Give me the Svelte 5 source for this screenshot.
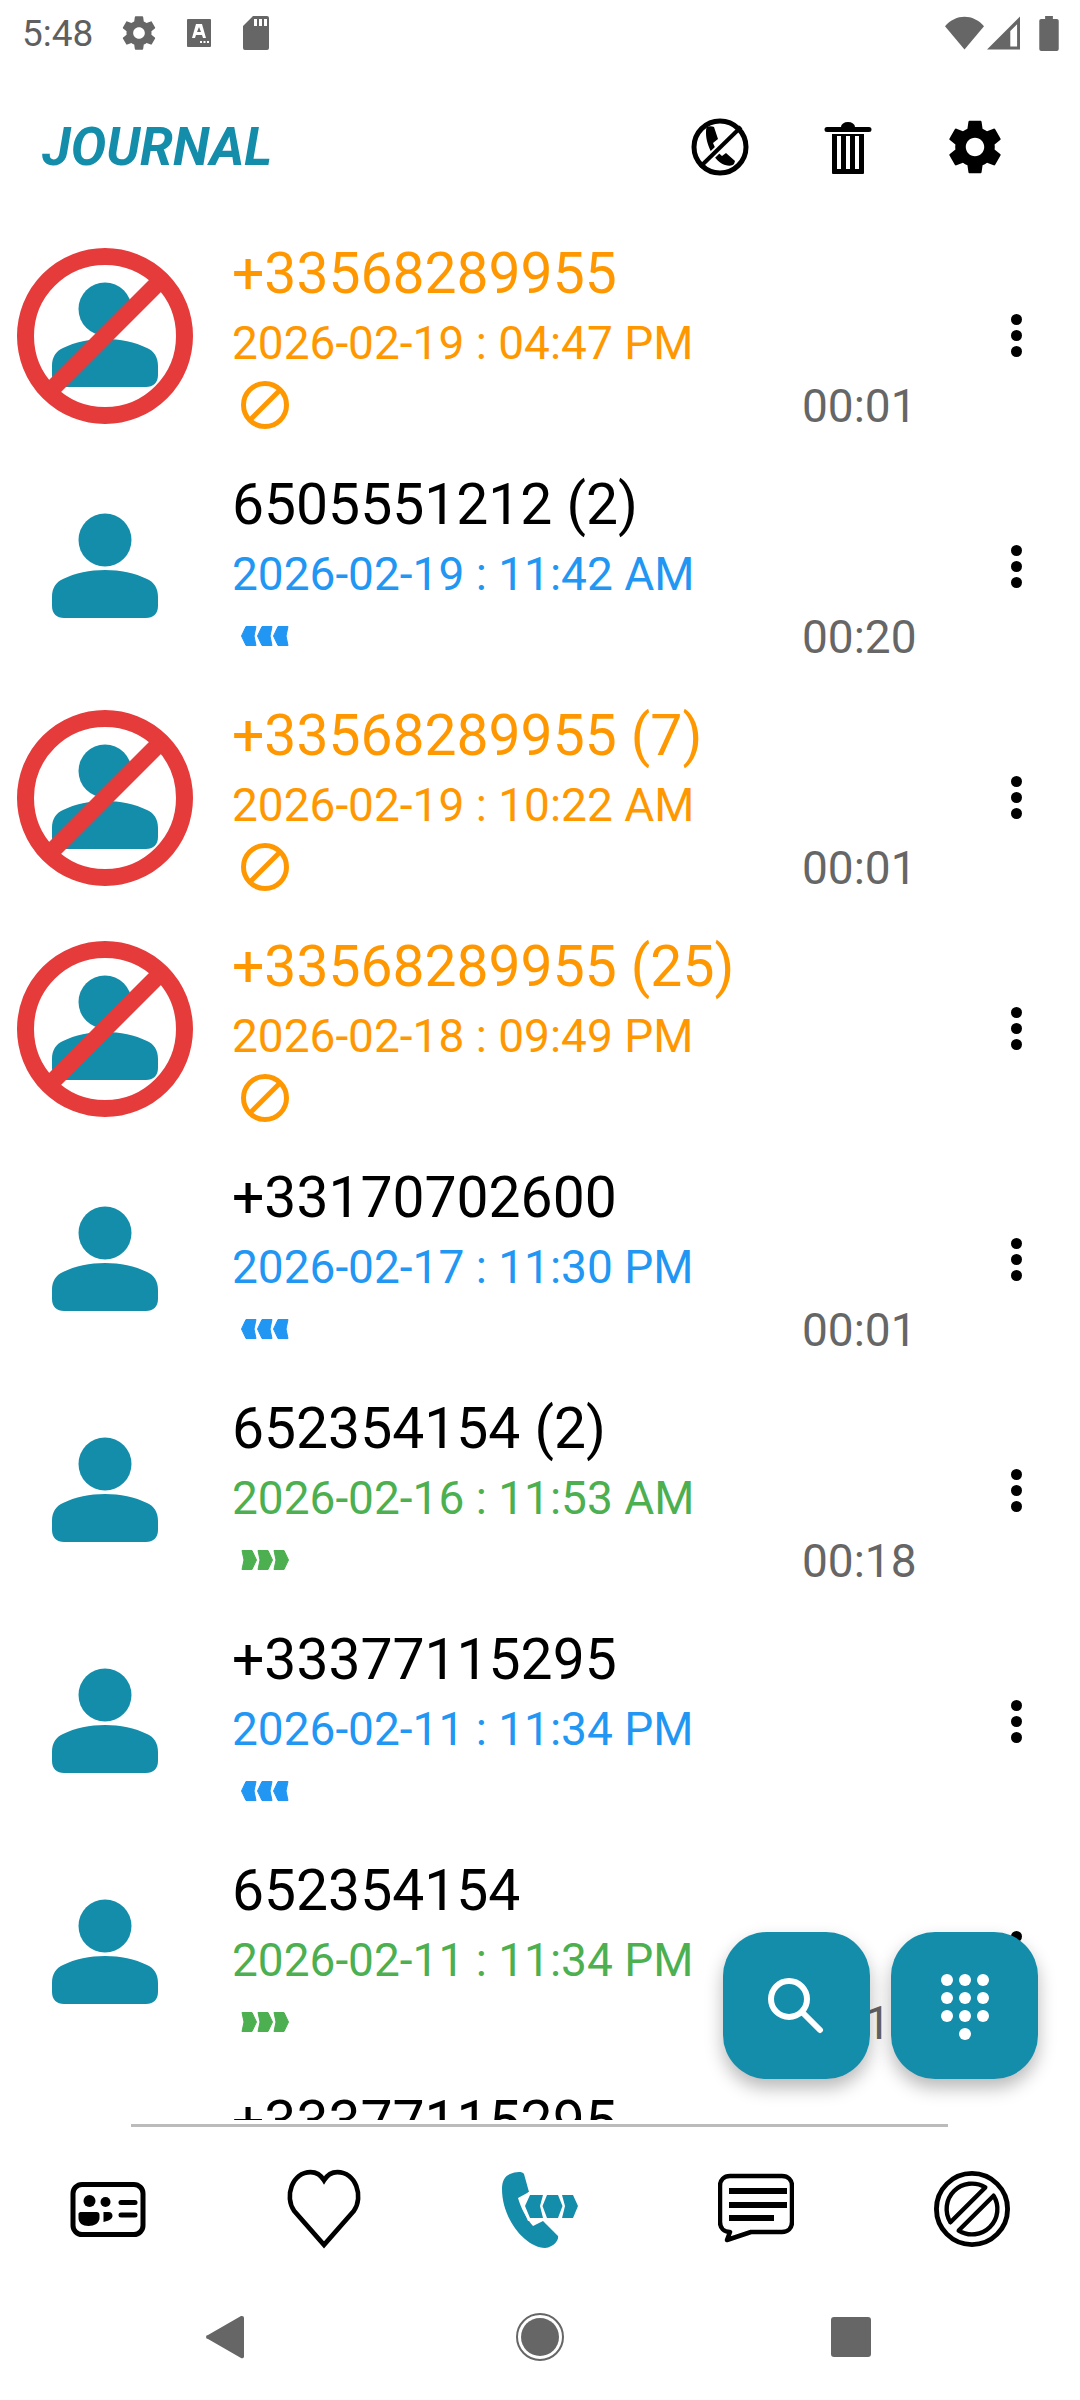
<script>
	const rows = [
		{ name: '+33568289955', date: '2026-02-19 : 04:47 PM', kind: 'blocked', dur: '00:01' },
		{ name: '6505551212 (2)', date: '2026-02-19 : 11:42 AM', kind: 'in', dur: '00:20' },
		{ name: '+33568289955 (7)', date: '2026-02-19 : 10:22 AM', kind: 'blocked', dur: '00:01' },
		{ name: '+33568289955 (25)', date: '2026-02-18 : 09:49 PM', kind: 'blocked', dur: '' },
		{ name: '+33170702600', date: '2026-02-17 : 11:30 PM', kind: 'in', dur: '00:01' },
		{ name: '652354154 (2)', date: '2026-02-16 : 11:53 AM', kind: 'out', dur: '00:18' },
		{ name: '+33377115295', date: '2026-02-11 : 11:34 PM', kind: 'in', dur: '' },
		{ name: '652354154', date: '2026-02-11 : 11:34 PM', kind: 'out', dur: '00:10' },
		{ name: '+33377115295', date: '2026-02-11 : 11:30 PM', kind: 'in', dur: '' }
	];
	const gearPath = 'M19.43 12.98c.04-.32.07-.64.07-.98s-.03-.66-.07-.98l2.11-1.65c.19-.15.24-.42.12-.64l-2-3.46c-.12-.22-.39-.3-.61-.22l-2.49 1c-.52-.4-1.08-.73-1.69-.98l-.38-2.65C14.46 2.18 14.25 2 14 2h-4c-.25 0-.46.18-.49.42l-.38 2.65c-.61.25-1.17.59-1.69.98l-2.49-1c-.23-.09-.49 0-.61.22l-2 3.46c-.13.22-.07.49.12.64l2.11 1.65c-.04.32-.07.65-.07.98s.03.66.07.98l-2.11 1.65c-.19.15-.24.42-.12.64l2 3.46c.12.22.39.3.61.22l2.49-1c.52.4 1.08.73 1.69.98l.38 2.65c.03.24.24.42.49.42h4c.25 0 .46-.18.49-.42l.38-2.65c.61-.25 1.17-.59 1.69-.98l2.49 1c.23.09.49 0 .61-.22l2-3.46c.12-.22.07-.49-.12-.64l-2.11-1.65zM12 15.5c-1.93 0-3.5-1.57-3.5-3.5s1.57-3.5 3.5-3.5 3.5 1.57 3.5 3.5-1.57 3.5-3.5 3.5z';
</script>

<div class="screen">
	<div class="status">
		<span class="time">5:48</span>
		<svg class="st-gear" viewBox="0 0 24 24"><path d={gearPath} /></svg>
		<svg class="st-a" viewBox="0 0 24 28"><path fill-rule="evenodd" d="M1 0h22a1 1 0 0 1 1 1v26a1 1 0 0 1-1 1H1a1 1 0 0 1-1-1V1a1 1 0 0 1 1-1zM9 5 5 19h3l1-3h6l1 3h3L15 5zM10 13l2-5 2 5zM13 22h2v2h-2zM16.500 22h2v2h-2zM20 22h2v2h-2z" /></svg>
		<svg class="st-sd" viewBox="0 0 26 34"><path fill-rule="evenodd" d="M10 0h14a2 2 0 0 1 2 2v30a2 2 0 0 1-2 2H2a2 2 0 0 1-2-2V10zM11 3v7h3V3zM16 3v7h3V3zM21 3v7h3V3z" /></svg>
		<span class="spacer"></span>
		<svg class="st-wifi" viewBox="0 0 40 34"><path d="M0 10C11-3 29-3 40 10L20 34z" /></svg>
		<svg class="st-signal" viewBox="0 0 34 34"><path fill-rule="evenodd" d="M34 0v34H0zM31 8 24 15v16h7z" /></svg>
		<svg class="st-batt" viewBox="0 0 20 36"><path d="M6 0h8v3h4a2 2 0 0 1 2 2v29a2 2 0 0 1-2 2H2a2 2 0 0 1-2-2V5a2 2 0 0 1 2-2h4z" /></svg>
	</div>

	<header class="toolbar">
		<h1>JOURNAL</h1>
		<div class="actions">
			<svg viewBox="11 17 58 58">
				<path d="M27 26c2-1 5-1 7 0l4 12-5 4c2 5 5 10 9 13l4-3 9 8-1 3c-2 2-5 2-9 1-10-3-19-19-19-32 0-3 0-5 1-6z" />
				<path d="M61 26 20 66" stroke="#fff" stroke-width="8" />
				<path d="M61 26 20 66" stroke="#000" stroke-width="4" />
				<circle cx="40" cy="46" r="26" fill="none" stroke="#000" stroke-width="5" />
			</svg>
			<svg viewBox="-7 -2 58 58">
				<path d="M1 7h14a7 5 0 0 1 14 0h14a1.500 1.500 0 0 1 0 5H1a1.500 1.500 0 0 1 0-5z" />
				<path fill-rule="evenodd" d="M6 14h32v39a1 1 0 0 1-1 1H7a1 1 0 0 1-1-1zM11 16v33h4V16zM20 16v33h4V16zM29 16v33h4V16z" />
			</svg>
			<svg viewBox="1 1 22 22"><path d={gearPath} /></svg>
		</div>
	</header>

	<main class="list">
		{#each rows as row}
			<div class="row {row.kind}">
				<div class="avatar">
					<svg viewBox="0 0 180 180">
						<circle cx="90" cy="63" r="26.500" fill="#148dab" />
						<path d="M37 120c0-9 4-15 11-18 12-6 27-9 42-9s30 3 42 9c7 3 11 9 11 18v9c0 8-5 12-12 12H49c-7 0-12-4-12-12z" fill="#148dab" />
						{#if row.kind === 'blocked'}
							<circle cx="90" cy="90" r="79.500" fill="none" stroke="#e53b3b" stroke-width="17" />
							<path d="M146 34 34 146" stroke="#e53b3b" stroke-width="17" />
						{/if}
					</svg>
				</div>
				<div class="info">
					<div class="name">{row.name}</div>
					<div class="date">{row.date}</div>
					<div class="type">
						{#if row.kind === 'blocked'}
							<svg class="ban" viewBox="0 0 48 48">
								<circle cx="24" cy="24" r="21.500" fill="none" stroke="#ff9800" stroke-width="5" />
								<path d="M39 9 9 39" stroke="#ff9800" stroke-width="5" />
							</svg>
						{:else}
							<svg class="arrows" viewBox="0 0 48 20">
								{#each [0, 16, 32] as x}
									{#if row.kind === 'in'}
										<path transform="translate({x} 0)" d="M.5 10 5 .5h10L13 10l2 9.500H5z" />
									{:else}
										<path transform="translate({x} 0)" d="M15.500 10 11 .5H1L3 10l-2 9.500h10z" />
									{/if}
								{/each}
							</svg>
						{/if}
					</div>
				</div>
				<div class="dur">{row.dur}</div>
				<div class="kebab"><i></i><i></i><i></i></div>
			</div>
		{/each}
	</main>

	<div class="fabs">
		<button class="fab" aria-label="search">
			<svg viewBox="1 0 60 60" width="60" height="60">
				<circle cx="23" cy="23" r="18" fill="none" stroke="#fff" stroke-width="6" />
				<path d="M37 37 54 54" stroke="#fff" stroke-width="6" stroke-linecap="round" />
			</svg>
		</button>
		<button class="fab" aria-label="dialpad">
			<svg viewBox="0 -1 50 68" width="50" height="68">
				{#each [0, 1, 2, 3] as r}
					{#each [0, 1, 2] as c}
						{#if r < 3 || c === 1}
							<circle cx={7 + c * 18} cy={7 + r * 18} r="6" fill="#fff" />
						{/if}
					{/each}
				{/each}
			</svg>
		</button>
	</div>

	<div class="rule"></div>

	<nav class="tabs">
		<svg class="card" viewBox="-2.500 0 100 80">
			<rect x="12.500" y="15.500" width="70" height="50" rx="9" fill="none" stroke="#000" stroke-width="5" />
			<circle cx="29" cy="32" r="6" />
			<circle cx="45" cy="33" r="5" />
			<path d="M20 43h16c2 0 3 1 3 3v3c0 5-5 8-11 8s-10-3-10-8v-4c0-1 1-2 2-2zM43 43h5c3 0 4 2 4 4 0 3-4 5-9 6z" />
			<rect x="58" y="31" width="19" height="5" rx="2.500" />
			<rect x="58" y="43.500" width="19" height="5" rx="2.500" />
		</svg>
		<svg class="heart" viewBox="0 0 76 78">
			<path d="M38 74 9 41C-1 27 7 3 25 3c6 0 10 3 13 8 3-5 7-8 13-8 18 0 26 24 16 38z" fill="none" stroke="#000" stroke-width="4.500" />
		</svg>
		<svg class="active" viewBox="0 0 100 100">
			<path d="M20 15c5-2 12-3 14 0l5 18-11 6c3 10 8 20 15 28l10-5 15 15c1 3-3 11-13 12C35 88 12 60 12 30c0-8 3-13 8-15z" />
			<g fill="#fff" stroke="#fff" stroke-width="6">
				<path d="M35 47 40 36h13l-3 11 3 12H40z" />
			</g>
			<path d="M35 47 40 36h13l-3 11 3 12H40z" />
			<path d="M52.500 47 57 36h11l4.500 11L68 59H57z" />
			<path d="M72 36h11l5 11-5 12H72l3-12z" />
		</svg>
		<svg viewBox="0 0 76 70">
			<path d="M12 2h52c6 0 10 4 10 10v36c0 6-4 10-10 10H33L9 66l3-8c-6 0-10-4-10-10V12C2 6 6 2 12 2z" fill="none" stroke="#000" stroke-width="4.500" stroke-linejoin="round" />
			<rect x="11" y="14" width="58" height="6" />
			<rect x="11" y="28" width="58" height="6" />
			<rect x="11" y="41" width="45" height="6" />
		</svg>
		<svg viewBox="0 0 78 80">
			<circle cx="39" cy="40" r="36.500" fill="none" stroke="#000" stroke-width="5" />
			<g fill="none" stroke="#000" stroke-width="4.500" stroke-linejoin="round">
				<path d="M61.140 26.340A26 26 0 0 1 25.340 62.140Z" />
				<path d="M16.860 53.660A26 26 0 0 1 52.660 17.860Z" />
			</g>
		</svg>
	</nav>

	<div class="sysnav">
		<svg class="back" viewBox="0 0 38 44"><path d="M36 1a2 2 0 0 1 2 2v38a2 2 0 0 1-3 2L2 24a2 2 0 0 1 0-4L35 1z" /></svg>
		<svg class="home" viewBox="0 0 48 48">
			<circle cx="24" cy="24" r="23" fill="none" stroke="#666" stroke-width="2" />
			<circle cx="24" cy="24" r="19" />
		</svg>
		<svg class="recent" viewBox="0 0 40 40"><rect width="40" height="40" rx="3" /></svg>
	</div>
</div>

<style>
	:global(body) {
		background: #fff;
	}

	.screen {
		position: relative;
		width: 1080px;
		height: 2400px;
		overflow: hidden;
		background: #fff;
		font-family: Roboto, sans-serif;
		display: flex;
		flex-direction: column;
	}

	.status {
		height: 66px;
		display: flex;
		align-items: center;
		padding: 0 21px 0 22px;
		flex: none;
		color: #666;
		fill: #666;
	}

	.time {
		font-size: 37px;
		width: 89px;
		color: #5f5f5f;
	}

	.st-gear {
		width: 40px;
		height: 40px;
		margin-left: 8px;
	}

	.st-a {
		width: 24px;
		height: 28px;
		margin-left: 28px;
	}

	.st-sd {
		width: 26px;
		height: 34px;
		margin-left: 32px;
	}

	.spacer {
		flex: 1;
	}

	.st-wifi {
		width: 39px;
		height: 34px;
	}

	.st-signal {
		width: 33px;
		height: 34px;
		margin-left: 3px;
	}

	.st-batt {
		width: 20px;
		height: 35px;
		margin-left: 19px;
	}

	.toolbar {
		height: 152px;
		box-sizing: border-box;
		flex: none;
		display: flex;
		align-items: center;
		justify-content: space-between;
		padding: 10px 76px 0 42px;
	}

	h1 {
		margin: 0;
		font-size: 53px;
		font-weight: 700;
		font-style: italic;
		color: #148dab;
	}

	.actions {
		display: flex;
		align-items: center;
		gap: 69.500px;
	}

	.actions svg {
		width: 58px;
		height: 58px;
	}

	.list {
		height: 1902px;
		flex: none;
		overflow: hidden;
	}

	.row {
		height: 231px;
		display: flex;
		align-items: flex-start;
		position: relative;
		color: #000;
	}

	.row.blocked {
		color: #ff9800;
		--sub: #ff9800;
	}

	.row.in {
		--sub: #2196f3;
	}

	.row.out {
		--sub: #4caf50;
	}

	.avatar {
		width: 180px;
		height: 180px;
		margin: 28px 0 0 15px;
		flex: none;
	}

	.avatar svg {
		display: block;
		width: 180px;
		height: 180px;
	}

	.info {
		margin-left: 37px;
		padding-top: 23px;
		flex: 1;
	}

	.name {
		font-size: 57px;
		line-height: 66px;
		white-space: nowrap;
	}

	.date {
		font-size: 46px;
		line-height: 52px;
		margin-top: 10px;
		color: var(--sub);
		white-space: nowrap;
	}

	.type {
		height: 62px;
		margin: 5px 0 0 9px;
		display: flex;
		align-items: center;
		color: var(--sub);
		fill: var(--sub);
		stroke: var(--sub);
		stroke-linejoin: round;
		stroke-width: 1px;
	}

	.ban {
		width: 48px;
		height: 48px;
		display: block;
	}

	.arrows {
		width: 48px;
		height: 20px;
		display: block;
	}

	.dur {
		position: absolute;
		left: 802px;
		top: 162px;
		font-size: 46px;
		line-height: 52px;
		color: #666;
	}

	.kebab {
		position: absolute;
		left: 1011px;
		top: 96px;
		display: flex;
		flex-direction: column;
		gap: 5px;
	}

	.kebab i {
		display: block;
		width: 11px;
		height: 11px;
		border-radius: 50%;
		background: #000;
	}

	.fabs {
		position: absolute;
		left: 723px;
		top: 1932px;
		display: flex;
		gap: 21px;
	}

	.fab {
		width: 147px;
		height: 147px;
		padding: 0;
		border: 0;
		border-radius: 44px;
		background: #148dab;
		box-shadow: 0 9px 18px rgba(0, 0, 0, 0.28);
		display: flex;
		align-items: center;
		justify-content: center;
	}

	.rule {
		height: 3px;
		flex: none;
		margin: 4px 132px 0 131px;
		background: #bbb;
	}

	.tabs {
		height: 150px;
		flex: none;
		display: grid;
		grid-template-columns: repeat(5, 216px);
		justify-items: center;
		align-items: center;
		padding-top: 14px;
		box-sizing: border-box;
	}

	.tabs svg {
		width: 76px;
		height: 78px;
	}

	.tabs .card {
		width: 100px;
		height: 80px;
	}

	.tabs .heart {
		width: 78px;
		height: 80px;
	}

	.tabs .active {
		width: 100px;
		height: 100px;
		fill: #148dab;
	}

	.sysnav {
		flex: 1;
		position: relative;
		fill: #666;
	}

	.sysnav svg {
		position: absolute;
		top: calc(50% - 2px);
	}

	.back {
		left: 206px;
		width: 38px;
		height: 44px;
		margin-top: -22px;
	}

	.home {
		left: 516px;
		width: 48px;
		height: 48px;
		margin-top: -24px;
	}

	.recent {
		left: 831px;
		width: 40px;
		height: 40px;
		margin-top: -20px;
	}
</style>
